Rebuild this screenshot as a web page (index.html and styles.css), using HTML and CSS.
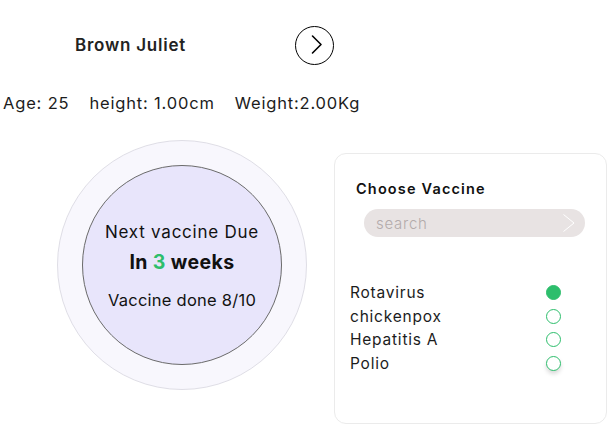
FILE: index.html
```html
<!DOCTYPE html>
<html lang="en">

<head>
    <meta charset="UTF-8">
    <meta name="viewport" content="width=device-width, initial-scale=1.0">
    <title>Vaccine Tracker</title>
    <link rel="stylesheet" href="styles.css">
</head>

<body>
    <div class="profile-head">
        <h2 class="child-name">Brown Juliet</h2>
        <button class="next-btn" aria-label="Next">
            <svg width="36" height="36" viewBox="0 0 36 36">
                <path d="M15.5 9 L24 17.5 L15.5 26" fill="none" stroke="#000" stroke-width="1.6" stroke-linecap="round" stroke-linejoin="round" />
            </svg>
        </button>
    </div>

    <div class="stats">
        <span>Age: 25</span>
        <span>height: 1.00cm</span>
        <span>Weight:2.00Kg</span>
    </div>

    <div class="main">
        <div class="ring">
            <div class="ring-inner">
                <p class="due-label">Next vaccine Due</p>
                <p class="due-time">In <span class="accent">3</span> weeks</p>
                <p class="done">Vaccine done 8/10</p>
            </div>
        </div>

        <div class="card">
            <h3 class="card-title">Choose Vaccine</h3>
            <div class="search">
                <input type="text" placeholder="search">
                <svg width="12" height="18" viewBox="0 0 12 18">
                    <path d="M0.5 0.5 L11 9 L0.5 17.5" fill="none" stroke="#fff" stroke-width="1" />
                </svg>
            </div>
            <ul class="vaccine-list">
                <li><label>Rotavirus <input type="radio" name="vaccine" checked></label></li>
                <li><label>chickenpox <input type="radio" name="vaccine"></label></li>
                <li><label>Hepatitis A <input type="radio" name="vaccine"></label></li>
                <li><label>Polio <input type="radio" name="vaccine" class="raised"></label></li>
            </ul>
        </div>
    </div>
</body>

</html>
```

FILE: styles.css
```css
body {
    margin: 0;
    width: 608px;
    font-family: Inter, "Open Sans", sans-serif;
    color: #1c1c1c;
    background: #fff;
}

.profile-head {
    display: flex;
    align-items: center;
    padding: 25px 0 0 75px;
}

.child-name {
    width: 220px;
    margin: 0;
    font-size: 17px;
    font-weight: 600;
    letter-spacing: 0.045em;
    line-height: 40px;
    color: #222;
}

.next-btn {
    width: 39px;
    height: 39px;
    padding: 0;
    border: 1.6px solid #000;
    border-radius: 50%;
    background: none;
    display: flex;
    align-items: center;
    justify-content: center;
    cursor: pointer;
}

.stats {
    display: flex;
    gap: 20px;
    padding: 26px 0 0 3px;
    font-size: 16.5px;
    letter-spacing: 0.05em;
    line-height: 24px;
}

.main {
    display: flex;
    align-items: flex-start;
    gap: 27px;
    padding: 25px 0 0 57px;
}

.ring {
    width: 248px;
    height: 248px;
    flex: none;
    border: 1px solid #dfdee6;
    border-radius: 50%;
    background: #f8f7fd;
    display: flex;
    align-items: center;
    justify-content: center;
}

.ring-inner {
    width: 198px;
    height: 198px;
    border: 1px solid #6a6a6a;
    border-radius: 50%;
    background: #e8e5fb;
    display: flex;
    flex-direction: column;
    align-items: center;
    justify-content: center;
    text-align: center;
    color: #111;
}

.ring-inner p {
    margin: 0;
}

.due-label {
    margin-top: 2px !important;
    font-size: 17px;
    letter-spacing: 0.045em;
    line-height: 22px;
}

.due-time {
    margin-top: 6px !important;
    font-size: 19.5px;
    font-weight: 700;
    letter-spacing: 0.02em;
    line-height: 26px;
}

.accent {
    color: #2dbe6c;
}

.done {
    margin-top: 14px !important;
    font-size: 16.5px;
    letter-spacing: 0.015em;
    line-height: 22px;
}

.card {
    width: 271px;
    height: 269px;
    margin-top: 13px;
    border: 1px solid #ebebeb;
    border-radius: 12px;
    box-sizing: content-box;
}

.card-title {
    margin: 25px 0 0 21px;
    font-size: 14.5px;
    font-weight: 600;
    letter-spacing: 0.08em;
    line-height: 20px;
    color: #111;
}

.search {
    display: flex;
    align-items: center;
    height: 28px;
    margin: 10px 21px 0 29px;
    padding: 0 10px 0 12px;
    border-radius: 14px;
    background: #e8e3e3;
}

.search input {
    flex: 1;
    min-width: 0;
    border: none;
    background: none;
    outline: none;
    padding: 0;
    font-family: inherit;
    font-size: 15px;
    font-weight: 300;
    letter-spacing: 0.05em;
}

.search input::placeholder {
    color: #b3abab;
}

.vaccine-list {
    list-style: none;
    margin: 44px 45px 0 15px;
    padding: 0;
}

.vaccine-list label {
    display: flex;
    align-items: center;
    justify-content: space-between;
    font-size: 15.5px;
    letter-spacing: 0.05em;
    line-height: 23.5px;
    color: #1c1c1c;
}

.vaccine-list input {
    appearance: none;
    width: 15px;
    height: 15px;
    margin: 0;
    border: 1.3px solid #2dbe6c;
    border-radius: 50%;
    background: #fff;
}

.vaccine-list input:checked {
    background: #2dbe6c;
}

.vaccine-list input.raised {
    box-shadow: 0 3px 4px rgba(0, 0, 0, 0.15);
}
```
